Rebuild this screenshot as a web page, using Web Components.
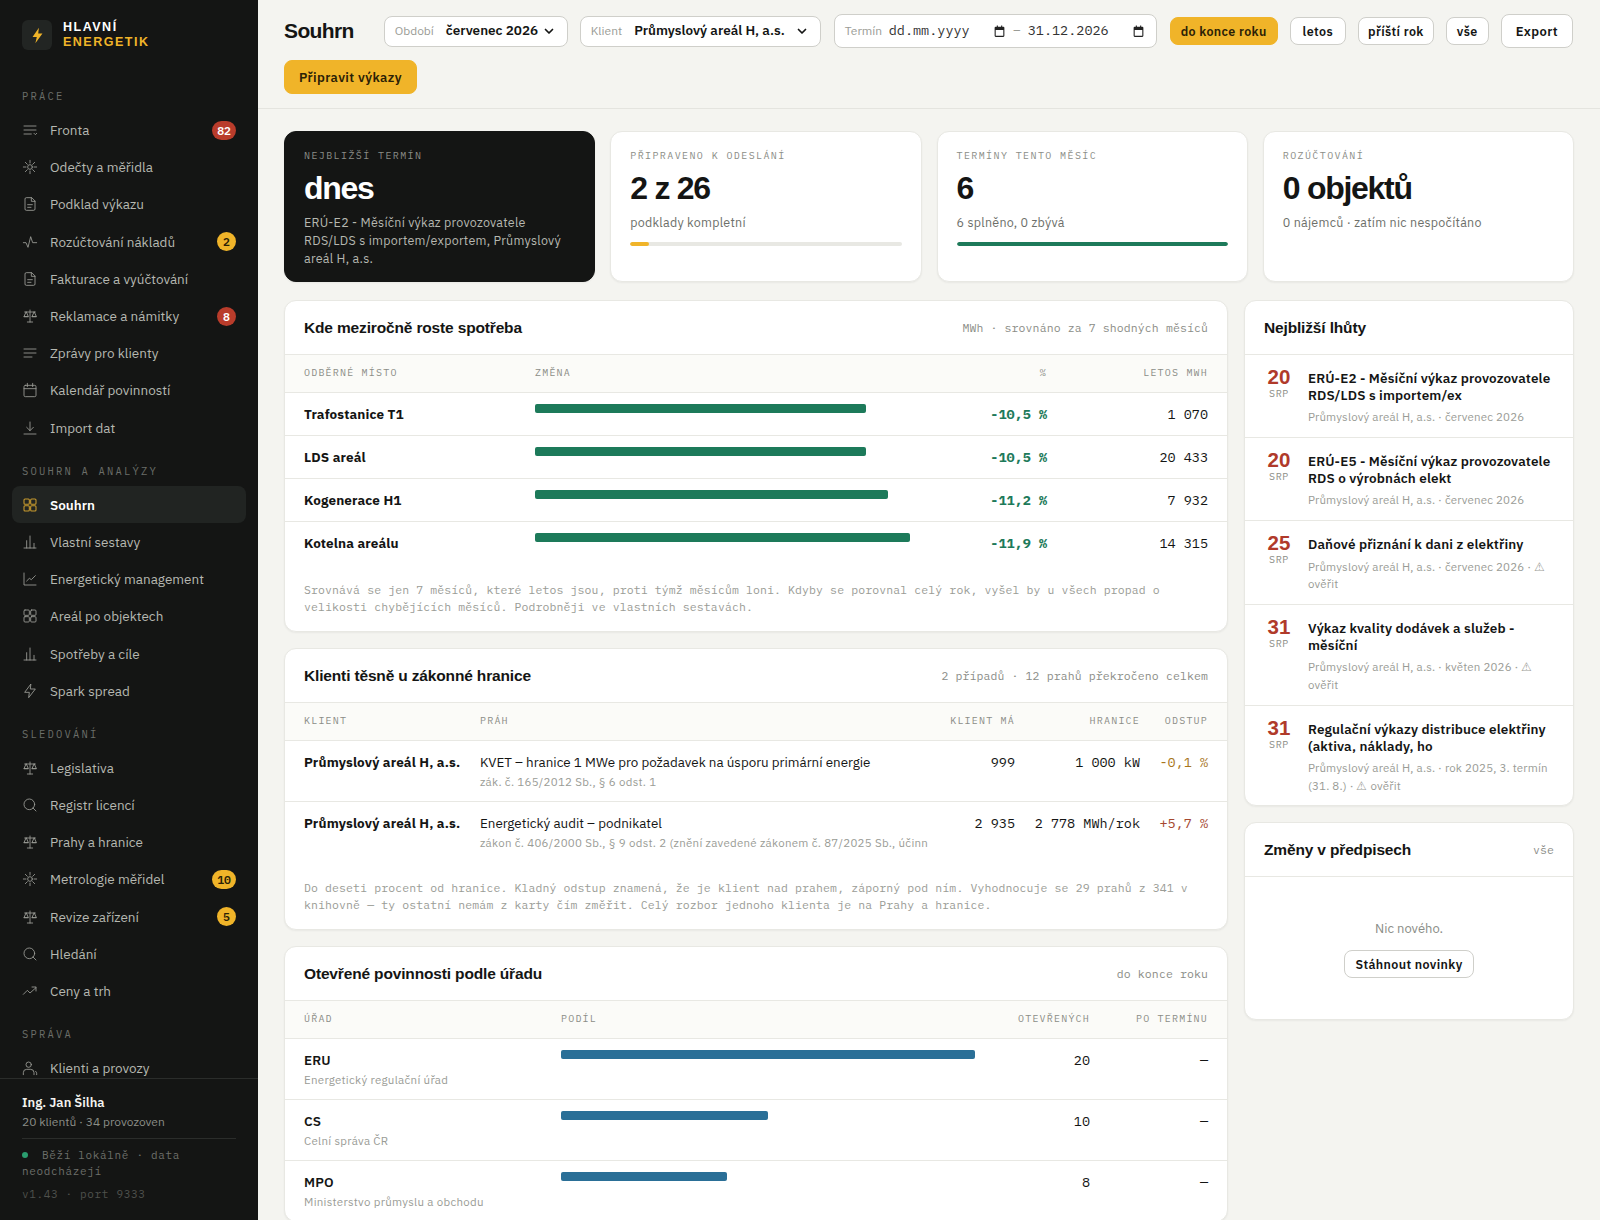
<!DOCTYPE html>
<html lang="cs">
<head>
<meta charset="utf-8">
<title>Souhrn</title>
<style>
    html, body { margin: 0; height: 100%; }
    body {
        --sans: "IBM Plex Sans", "Noto Sans", sans-serif;
        --mono: "IBM Plex Mono", "Liberation Mono", monospace;
        --head: "Liberation Sans", sans-serif;
        font-family: var(--sans);
        color: #141514;
        background: #f4f4f0;
        overflow: hidden;
    }
    he-app { height: 100vh; }
</style>
</head>
<body>
<template id="iconSet">
    <svg data-i="queue" viewBox="0 0 24 24"><path d="M3 6h18M3 12h18M3 18h11M18 17l2 2 2-2"/></svg>
    <svg data-i="sun" viewBox="0 0 24 24"><circle cx="12" cy="12" r="3.5"/><path d="M12 2v4M12 18v4M2 12h4M18 12h4M5 5l3 3M16 16l3 3M5 19l3-3M16 8l3-3"/></svg>
    <svg data-i="doc" viewBox="0 0 24 24"><path d="M14 2.5H6.5a2 2 0 0 0-2 2v15a2 2 0 0 0 2 2h11a2 2 0 0 0 2-2V8zM14 2.5V8h5.5M8.5 13h7M8.5 17h5"/></svg>
    <svg data-i="pulse" viewBox="0 0 24 24"><path d="M2 13h4l3 7 4-16 3 9h6"/></svg>
    <svg data-i="scale" viewBox="0 0 24 24"><path d="M12 3v18M8 21h8M4 6h16M6 6l-3 7h6zM18 6l-3 7h6zM3 13h6M15 13h6"/></svg>
    <svg data-i="lines" viewBox="0 0 24 24"><path d="M3 6h18M3 12h18M3 18h12"/></svg>
    <svg data-i="cal" viewBox="0 0 24 24"><rect x="3" y="5" width="18" height="17" rx="2"/><path d="M3 10h18M8 2v5M16 2v5"/></svg>
    <svg data-i="down" viewBox="0 0 24 24"><path d="M12 3v13M7 11l5 5 5-5M3 21h18"/></svg>
    <svg data-i="grid" viewBox="0 0 24 24"><rect x="3" y="3" width="8" height="8" rx="1.5"/><rect x="13" y="3" width="8" height="8" rx="1.5"/><rect x="3" y="13" width="8" height="8" rx="1.5"/><rect x="13" y="13" width="8" height="8" rx="1.5"/></svg>
    <svg data-i="bars" viewBox="0 0 24 24"><path d="M3 21h18M7 21V10M12 21V3M18 21v-7"/></svg>
    <svg data-i="chart" viewBox="0 0 24 24"><path d="M3 3v18h18M7 15l4-4 3 2 6-6"/></svg>
    <svg data-i="bolt" viewBox="0 0 24 24"><path d="M13 2 4 14h7l-1 8 10-13h-7z"/></svg>
    <svg data-i="search" viewBox="0 0 24 24"><circle cx="11" cy="11" r="8"/><path d="m21 21-4.5-4.5"/></svg>
    <svg data-i="trend" viewBox="0 0 24 24"><path d="M2 17l6-6 4 4 9-8M15 6h6v6"/></svg>
    <svg data-i="user" viewBox="0 0 24 24"><circle cx="10" cy="7" r="4"/><path d="M2 22v-3a5 5 0 0 1 5-5h6a5 5 0 0 1 5 5v3M22 22v-2a4 4 0 0 0-1.5-3"/></svg>
</template>

<he-app>
    <he-sidebar slot="side">
        <he-nav-section label="Práce">
            <he-nav-item icon="queue" badge="82" tone="red">Fronta</he-nav-item>
            <he-nav-item icon="sun">Odečty a měřidla</he-nav-item>
            <he-nav-item icon="doc">Podklad výkazu</he-nav-item>
            <he-nav-item icon="pulse" badge="2" tone="amber">Rozúčtování nákladů</he-nav-item>
            <he-nav-item icon="doc">Fakturace a vyúčtování</he-nav-item>
            <he-nav-item icon="scale" badge="8" tone="red">Reklamace a námitky</he-nav-item>
            <he-nav-item icon="lines">Zprávy pro klienty</he-nav-item>
            <he-nav-item icon="cal">Kalendář povinností</he-nav-item>
            <he-nav-item icon="down">Import dat</he-nav-item>
        </he-nav-section>
        <he-nav-section label="Souhrn a analýzy">
            <he-nav-item icon="grid" active>Souhrn</he-nav-item>
            <he-nav-item icon="bars">Vlastní sestavy</he-nav-item>
            <he-nav-item icon="chart">Energetický management</he-nav-item>
            <he-nav-item icon="grid">Areál po objektech</he-nav-item>
            <he-nav-item icon="bars">Spotřeby a cíle</he-nav-item>
            <he-nav-item icon="bolt">Spark spread</he-nav-item>
        </he-nav-section>
        <he-nav-section label="Sledování">
            <he-nav-item icon="scale">Legislativa</he-nav-item>
            <he-nav-item icon="search">Registr licencí</he-nav-item>
            <he-nav-item icon="scale">Prahy a hranice</he-nav-item>
            <he-nav-item icon="sun" badge="10" tone="amber">Metrologie měřidel</he-nav-item>
            <he-nav-item icon="scale" badge="5" tone="amber">Revize zařízení</he-nav-item>
            <he-nav-item icon="search">Hledání</he-nav-item>
            <he-nav-item icon="trend">Ceny a trh</he-nav-item>
        </he-nav-section>
        <he-nav-section label="Správa">
            <he-nav-item icon="user">Klienti a provozy</he-nav-item>
        </he-nav-section>
    </he-sidebar>

    <he-topbar slot="top"></he-topbar>

    <he-kpi-row>
        <he-kpi dark label="Nejbližší termín" value="dnes">ERÚ-E2 - Měsíční výkaz provozovatele RDS/LDS s importem/exportem, Průmyslový areál H, a.s.</he-kpi>
        <he-kpi label="Připraveno k odeslání" value="2 z 26" progress="7" tone="#f0b429">podklady kompletní</he-kpi>
        <he-kpi label="Termíny tento měsíc" value="6" progress="100" tone="#1d7a5a">6 splněno, 0 zbývá</he-kpi>
        <he-kpi label="Rozúčtování" value="0 objektů">0 nájemců · zatím nic nespočítáno</he-kpi>
    </he-kpi-row>

    <he-columns>
        <div slot="left">
            <he-panel heading="Kde meziročně roste spotřeba" meta="MWh · srovnáno za 7 shodných měsíců" style="--cols:231px 375px 137px 161px">
                <he-row head><he-cell>Odběrné místo</he-cell><he-cell>Změna</he-cell><he-cell end>%</he-cell><he-cell end>Letos MWh</he-cell></he-row>
                <he-row><he-cell strong>Trafostanice T1</he-cell><he-cell><he-bar width="88.2"></he-bar></he-cell><he-cell end num tone="#1d7a5a" strong>-10,5 %</he-cell><he-cell end num>1 070</he-cell></he-row>
                <he-row><he-cell strong>LDS areál</he-cell><he-cell><he-bar width="88.2"></he-bar></he-cell><he-cell end num tone="#1d7a5a" strong>-10,5 %</he-cell><he-cell end num>20 433</he-cell></he-row>
                <he-row><he-cell strong>Kogenerace H1</he-cell><he-cell><he-bar width="94.1"></he-bar></he-cell><he-cell end num tone="#1d7a5a" strong>-11,2 %</he-cell><he-cell end num>7 932</he-cell></he-row>
                <he-row><he-cell strong>Kotelna areálu</he-cell><he-cell><he-bar width="100"></he-bar></he-cell><he-cell end num tone="#1d7a5a" strong>-11,9 %</he-cell><he-cell end num>14 315</he-cell></he-row>
                <he-note>Srovnává se jen 7 měsíců, které letos jsou, proti týmž měsícům loni. Kdyby se porovnal celý rok, vyšel by u všech propad o velikosti chybějících měsíců. Podrobněji ve vlastních sestavách.</he-note>
            </he-panel>
            <he-panel heading="Klienti těsně u zákonné hranice" meta="2 případů · 12 prahů překročeno celkem" style="--cols:176px 460px 75px 125px 68px">
                <he-row head><he-cell>Klient</he-cell><he-cell>Práh</he-cell><he-cell end>Klient má</he-cell><he-cell end>Hranice</he-cell><he-cell end>Odstup</he-cell></he-row>
                <he-row><he-cell strong>Průmyslový areál H, a.s.</he-cell><he-cell sub="zák. č. 165/2012 Sb., § 6 odst. 1">KVET – hranice 1 MWe pro požadavek na úsporu primární energie</he-cell><he-cell end num>999</he-cell><he-cell end num>1 000 kW</he-cell><he-cell end num tone="#a8761c">-0,1 %</he-cell></he-row>
                <he-row><he-cell strong>Průmyslový areál H, a.s.</he-cell><he-cell sub="zákon č. 406/2000 Sb., § 9 odst. 2 (znění zavedené zákonem č. 87/2025 Sb., účinn">Energetický audit – podnikatel</he-cell><he-cell end num>2 935</he-cell><he-cell end num>2 778 MWh/rok</he-cell><he-cell end num tone="#a5482f">+5,7 %</he-cell></he-row>
                <he-note>Do deseti procent od hranice. Kladný odstup znamená, že je klient nad prahem, záporný pod ním. Vyhodnocuje se 29 prahů z 341 v knihovně — ty ostatní nemám z karty čím změřit. Celý rozbor jednoho klienta je na Prahy a hranice.</he-note>
            </he-panel>
            <he-panel heading="Otevřené povinnosti podle úřadu" meta="do konce roku" style="--cols:257px 414px 115px 118px">
                <he-row head><he-cell>Úřad</he-cell><he-cell>Podíl</he-cell><he-cell end>Otevřených</he-cell><he-cell end>Po termínu</he-cell></he-row>
                <he-row><he-cell semi sub="Energetický regulační úřad">ERU</he-cell><he-cell><he-bar width="100" tone="#2a6f97"></he-bar></he-cell><he-cell end num>20</he-cell><he-cell end num>—</he-cell></he-row>
                <he-row><he-cell semi sub="Celní správa ČR">CS</he-cell><he-cell><he-bar width="50" tone="#2a6f97"></he-bar></he-cell><he-cell end num>10</he-cell><he-cell end num>—</he-cell></he-row>
                <he-row><he-cell semi sub="Ministerstvo průmyslu a obchodu">MPO</he-cell><he-cell><he-bar width="40" tone="#2a6f97"></he-bar></he-cell><he-cell end num>8</he-cell><he-cell end num>—</he-cell></he-row>
            </he-panel>
        </div>
        <div slot="right">
            <he-panel heading="Nejbližší lhůty">
                <he-deadline day="20" month="SRP" sub="Průmyslový areál H, a.s. · červenec 2026">ERÚ-E2 - Měsíční výkaz provozovatele RDS/LDS s importem/ex</he-deadline>
                <he-deadline day="20" month="SRP" sub="Průmyslový areál H, a.s. · červenec 2026">ERÚ-E5 - Měsíční výkaz provozovatele RDS o výrobnách elekt</he-deadline>
                <he-deadline day="25" month="SRP" sub="Průmyslový areál H, a.s. · červenec 2026 · ⚠ ověřit">Daňové přiznání k dani z elektřiny</he-deadline>
                <he-deadline day="31" month="SRP" sub="Průmyslový areál H, a.s. · květen 2026 · ⚠ ověřit">Výkaz kvality dodávek a služeb - měsíční</he-deadline>
                <he-deadline day="31" month="SRP" sub="Průmyslový areál H, a.s. · rok 2025, 3. termín (31. 8.) · ⚠ ověřit">Regulační výkazy distribuce elektřiny (aktiva, náklady, ho</he-deadline>
            </he-panel>
            <he-panel heading="Změny v předpisech" meta="vše">
                <he-empty action="Stáhnout novinky">Nic nového.</he-empty>
            </he-panel>
        </div>
    </he-columns>
</he-app>

<script>
    ((customElements, document) => {
        'use strict';

        const define = (name, css, html, setup) => {
            customElements.define(name, class extends HTMLElement {
                constructor() {
                    super();
                    this.attachShadow({mode: 'open'});
                }
                connectedCallback() {
                    const attr = (key) => this.getAttribute(key) || '';
                    this.shadowRoot.innerHTML = `<style>${css}</style>${html(attr, this)}`;
                    if (setup) setup(this.shadowRoot, attr, this);
                }
            });
        };

        const iconMarkup = (name) => {
            const set = document.querySelector('#iconSet').content;
            const svg = set.querySelector(`[data-i="${name}"]`);
            return svg ? svg.outerHTML : '';
        };

        define('he-app', `
            :host { display: grid; grid-template-columns: 258px 1fr; grid-template-rows: auto 1fr; overflow: hidden; }
            .side { grid-row: 1 / 3; min-height: 0; display: block; }
            .content { padding: 22px 26px 24px; overflow: hidden; min-height: 0; }
        `, () => `
            <div class="side"><slot name="side"></slot></div>
            <slot name="top"></slot>
            <div class="content"><slot></slot></div>
        `);

        define('he-sidebar', `
            :host { display: flex; flex-direction: column; height: 1220px; background: #141514; color: #b6b8b1; }
            .brand { display: flex; align-items: center; gap: 11px; padding: 20px 22px 0; height: 30px; flex: none; }
            .logo { width: 30px; height: 30px; border-radius: 6px; background: #222523; display: flex; align-items: center; justify-content: center; }
            .logo svg { width: 17px; height: 17px; fill: #f0b429; }
            .word { font: 700 12.5px/15px var(--head); letter-spacing: .12em; color: #fff; }
            .word span { display: block; color: #f0b429; }
            .nav { flex: 1; min-height: 0; overflow: hidden; padding: 38px 12px 0; }
            .foot { flex: none; border-top: 1px solid #2b2d2b; padding: 14px 22px 0; height: 142px; box-sizing: border-box; }
            .who { font: 600 13px/20px var(--sans); color: #f3f3ef; }
            .org { font: 400 12px/17px var(--sans); color: #8b8d87; }
            .status { margin-top: 8px; border-top: 1px solid #2b2d2b; padding-top: 8px; font: 400 11px/16px var(--mono); letter-spacing: .06em; color: #6d6f6a; }
            .dot { display: inline-block; width: 6px; height: 6px; border-radius: 50%; background: #2a9d6f; margin-right: 14px; vertical-align: 1px; }
            .ver { margin-top: 7px; color: #4f514d; }
        `, () => `
            <div class="brand">
                <div class="logo"><svg viewBox="0 0 24 24"><path d="M14 1 5 14h6l-2 9 10-14h-6z"/></svg></div>
                <div class="word">HLAVNÍ<span>ENERGETIK</span></div>
            </div>
            <div class="nav"><slot></slot></div>
            <div class="foot">
                <div class="who">Ing. Jan Šilha</div>
                <div class="org">20 klientů · 34 provozoven</div>
                <div class="status"><span class="dot"></span>Běží lokálně · data neodcházejí<div class="ver">v1.43 · port 9333</div></div>
            </div>
        `);

        define('he-nav-section', `
            :host { display: block; margin-bottom: 16.5px; }
            .label { font: 400 10.5px/16px var(--mono); letter-spacing: .21em; text-transform: uppercase; color: #6b6e69; padding: 0 10px; margin-bottom: 7.5px; }
        `, (attr) => `<div class="label">${attr('label')}</div><slot></slot>`);

        define('he-nav-item', `
            :host { display: flex; align-items: center; height: 37.2px; padding: 0 10px 0 10px; gap: 12px; border-radius: 8px; font: 400 13.5px/20px var(--sans); color: #b6b8b1; box-sizing: border-box; }
            :host([active]) { background: #212422; color: #fff; font-weight: 600; }
            svg { width: 16px; height: 16px; flex: none; fill: none; stroke: #9c9e98; stroke-width: 1.3; stroke-linecap: round; stroke-linejoin: round; }
            :host([active]) svg { stroke: #c89a2e; stroke-width: 1.6; }
            .text { flex: 1; white-space: nowrap; }
            .badge { min-width: 9px; padding: 0 5px; height: 19px; border-radius: 10px; font: 600 11.5px/19px var(--mono); text-align: center; }
            .red { background: #b93c2b; color: #fff; }
            .amber { background: #f0b429; color: #2b2106; }
        `, (attr) => `
            ${iconMarkup(attr('icon'))}
            <span class="text"><slot></slot></span>
            ${attr('badge') ? `<span class="badge ${attr('tone')}">${attr('badge')}</span>` : ''}
        `);

        define('he-field', `
            :host { display: inline-flex; align-items: center; height: 31px; background: #fff; border: 1px solid #cfcfca; border-radius: 8px; padding: 0 12px 0 10px; box-sizing: border-box; font: 400 13.5px/1 var(--sans); white-space: nowrap; }
            .lab { color: #9a9c96; font-size: 12px; margin-right: 12px; }
            .val { flex: 1; font-weight: 600; color: #141514; }
            svg { width: 12px; height: 12px; flex: none; fill: none; stroke: #141514; stroke-width: 3.4; stroke-linecap: round; stroke-linejoin: round; }
        `, (attr) => `
            <span class="lab">${attr('label')}</span>
            <span class="val">${attr('value')}</span>
            <svg viewBox="0 0 24 24"><path d="m5 9 7 7 7-7"/></svg>
        `);

        define('he-date-range', `
            :host { display: inline-flex; align-items: center; height: 34px; margin: 0 1px; background: #fff; border: 1px solid #cfcfca; border-radius: 8px; padding: 0 11px 0 10px; box-sizing: border-box; font: 400 13.5px/1 var(--mono); white-space: nowrap; color: #333; }
            .lab { color: #9a9c96; font: 400 12px/1 var(--sans); width: 44px; }
            .d { width: 117px; display: flex; justify-content: space-between; align-items: center; }
            svg { width: 13px; height: 13px; fill: #222; }
            .dash { color: #9a9c96; width: 22px; text-align: center; }
        `, () => `
            <span class="lab">Termín</span>
            <span class="d">dd.mm.yyyy<svg viewBox="0 0 24 24"><path fill-rule="evenodd" d="M7 1h2v2h6V1h2v2h2a2 2 0 0 1 2 2v15a2 2 0 0 1-2 2H5a2 2 0 0 1-2-2V5a2 2 0 0 1 2-2h2zM5 9v11h14V9z"/></svg></span>
            <span class="dash">–</span>
            <span class="d">31.12.2026<svg viewBox="0 0 24 24"><path fill-rule="evenodd" d="M7 1h2v2h6V1h2v2h2a2 2 0 0 1 2 2v15a2 2 0 0 1-2 2H5a2 2 0 0 1-2-2V5a2 2 0 0 1 2-2h2zM5 9v11h14V9z"/></svg></span>
        `);

        define('he-button', `
            :host { display: inline-flex; align-items: center; justify-content: center; height: 34px; padding: 0 14px; background: #fff; border: 1px solid #cfcfca; border-radius: 8px; box-sizing: border-box; font: 600 13px/1 var(--sans); letter-spacing: .03em; color: #141514; white-space: nowrap; }
            :host([small]) { height: 28px; padding: 0 10px; font-size: 12.5px; }
            :host([primary]) { background: #f0b429; border-color: #f0b429; color: #2b2106; }
        `, () => `<slot></slot>`);

        define('he-topbar', `
            :host { display: flex; flex-wrap: wrap; align-items: center; gap: 12px; padding: 14px 26px 13.5px; border-bottom: 1px solid #e4e4df; }
            h1 { margin: 0 18px 0 0; font: 700 21px/34px var(--head); letter-spacing: -.03em; color: #141514; }
            he-field:nth-of-type(1) { width: 184px; }
            he-field:nth-of-type(2) { width: 241px; }
            .wide { padding: 0 12px; }
            .tight { padding: 0 9px; }
        `, () => `
            <h1>Souhrn</h1>
            <he-field label="Období" value="červenec 2026"></he-field>
            <he-field label="Klient" value="Průmyslový areál H, a.s."></he-field>
            <he-date-range></he-date-range>
            <he-button small primary>do konce roku</he-button>
            <he-button small class="wide">letos</he-button>
            <he-button small class="tight">příští rok</he-button>
            <he-button small>vše</he-button>
            <he-button>Export</he-button>
            <he-button primary>Připravit výkazy</he-button>
        `);

        define('he-kpi-row', `
            :host { display: grid; grid-template-columns: repeat(4, 1fr); gap: 15px; margin-bottom: 18px; }
        `, () => `<slot></slot>`);

        define('he-kpi', `
            :host { display: block; background: #fff; border: 1px solid #e8e8e3; border-radius: 12px; padding: 16px 19px 14px; height: 151px; box-sizing: border-box; box-shadow: 0 1px 2px rgba(20,21,20,.05); }
            :host([dark]) { background: #141514; border-color: #141514; }
            .label { font: 400 10px/16px var(--mono); letter-spacing: .14em; text-transform: uppercase; color: #8b8d87; }
            .value { margin-top: 6px; font: 700 32px/36px var(--head); letter-spacing: -.04em; color: #141514; }
            :host([dark]) .value { color: #fff; }
            .text { margin-top: 7px; font: 400 12.5px/18px var(--sans); letter-spacing: .02em; color: #6d6f6a; max-width: 262px; }
            :host([dark]) .text { color: #b6b8b1; }
            .track { margin-top: 11px; height: 4px; border-radius: 2px; background: #e8e8e3; overflow: hidden; }
            .fill { height: 100%; border-radius: 2px; }
        `, (attr) => `
            <div class="label">${attr('label')}</div>
            <div class="value">${attr('value')}</div>
            <div class="text"><slot></slot></div>
            ${attr('progress') ? `<div class="track"><div class="fill" style="width:${attr('progress')}%;background:${attr('tone')}"></div></div>` : ''}
        `);

        define('he-columns', `
            :host { display: grid; grid-template-columns: 1fr 330px; gap: 16px; align-items: start; }
            ::slotted(div) { display: flex; flex-direction: column; gap: 16px; min-width: 0; }
        `, () => `<slot name="left"></slot><slot name="right"></slot>`);

        define('he-panel', `
            :host { display: block; background: #fff; border: 1px solid #e8e8e3; border-radius: 12px; overflow: hidden; box-shadow: 0 1px 2px rgba(20,21,20,.05); }
            header { display: flex; justify-content: space-between; align-items: center; height: 53px; padding: 1px 19px 0; box-sizing: border-box; }
            h2 { margin: 0; font: 700 15.5px/20px var(--head); letter-spacing: -.01em; color: #141514; }
            span { font: 400 11.5px/16px var(--mono); letter-spacing: .01em; color: #8b8d87; }
        `, (attr) => `
            <header><h2>${attr('heading')}</h2><span>${attr('meta')}</span></header>
            <slot></slot>
        `);

        define('he-row', `
            :host { display: grid; grid-template-columns: var(--cols); padding: 11px 19px; border-top: 1px solid #e8e8e3; }
            :host([head]) { background: #fbfbf8; padding: 8px 19px 9px; }
        `, () => `<slot></slot>`);

        define('he-cell', `
            :host { display: block; font: 400 13.4px/20px var(--sans); color: #141514; min-width: 0; white-space: nowrap; }
            :host([end]) { text-align: right; }
            :host([strong]) { font-weight: 700; font-size: 13.5px; letter-spacing: .01em; }
            :host([semi]) { font-weight: 600; font-size: 13.5px; letter-spacing: .01em; }
            :host([num]) { font-family: var(--mono); font-size: 13.5px; letter-spacing: 0; }
            .sub { margin-bottom: -1px; font: 400 11.5px/19px var(--sans); color: #9a9c96; letter-spacing: .025em; }
        `, (attr) => `<slot></slot>${attr('sub') ? `<div class="sub">${attr('sub')}</div>` : ''}`, (root, attr, el) => {
            if (el.closest('he-row[head]')) {
                el.style.cssText = 'font:400 10px/20px var(--mono);letter-spacing:.12em;text-transform:uppercase;color:#8b8d87';
            }
            if (attr('tone')) el.style.color = attr('tone');
        });

        define('he-bar', `
            :host { display: block; height: 9px; border-radius: 2px; }
        `, () => ``, (root, attr, el) => {
            el.style.width = `${attr('width')}%`;
            el.style.background = attr('tone') || '#1d7a5a';
        });

        define('he-note', `
            :host { display: block; padding: 17px 19px 16px; font: 400 11.5px/17px var(--mono); letter-spacing: .01em; color: #9a9c96; }
        `, () => `<slot></slot>`);

        define('he-deadline', `
            :host { display: grid; grid-template-columns: 30px 1fr; gap: 14px; padding: 15px 19px 11.4px; border-top: 1px solid #e8e8e3; }
            .date { text-align: center; margin-top: -2px; }
            .day { font: 700 20.5px/18px var(--head); color: #b03a2a; margin-bottom: 2px; }
            .mon { font: 400 10px/12px var(--mono); letter-spacing: .06em; color: #8b8d87; }
            .title { font: 600 13.5px/17.3px var(--sans); letter-spacing: .01em; color: #141514; }
            .sub { margin-top: 4px; font: 400 11.5px/17.4px var(--sans); letter-spacing: .015em; color: #9a9c96; }
        `, (attr) => `
            <div class="date"><div class="day">${attr('day')}</div><div class="mon">${attr('month')}</div></div>
            <div><div class="title"><slot></slot></div><div class="sub">${attr('sub')}</div></div>
        `);

        define('he-empty', `
            :host { display: flex; flex-direction: column; align-items: center; gap: 12px; border-top: 1px solid #e8e8e3; padding: 43px 19px 41px; font: 400 13px/18px var(--sans); color: #8b8d87; }
        `, (attr) => `<slot></slot><he-button small>${attr('action')}</he-button>`);
    })(window.customElements, document);
</script>
</body>
</html>
